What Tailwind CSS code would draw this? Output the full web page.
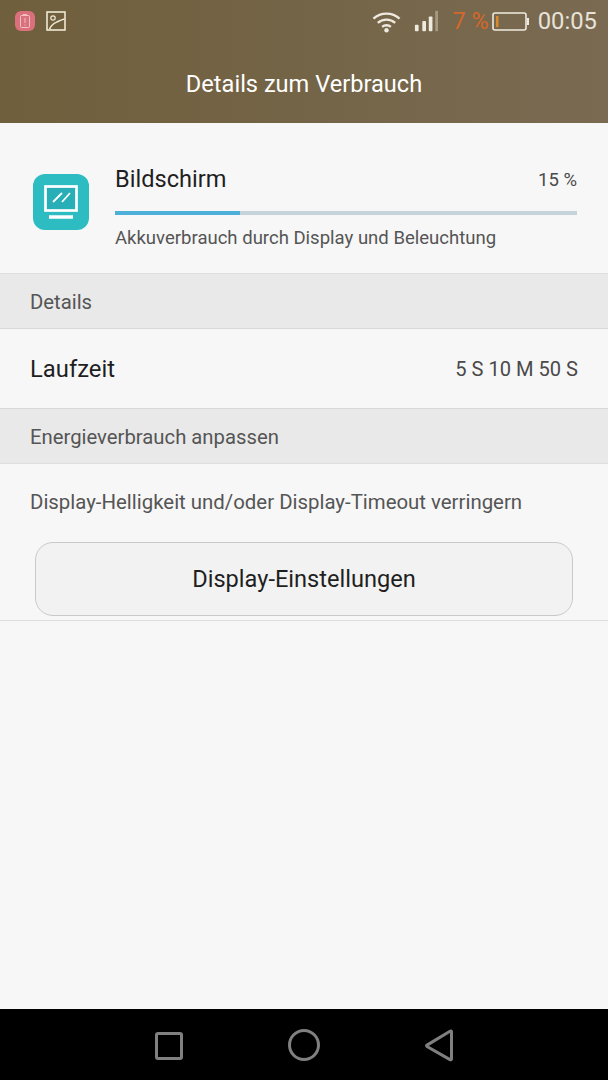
<!DOCTYPE html>
<html><head><meta charset="utf-8"><script src="https://cdn.jsdelivr.net/npm/@tailwindcss/browser@4"></script></head>
<body class="m-0">
<div class="w-[608px] h-[1080px] flex flex-col bg-[#f7f7f7] overflow-hidden font-['Roboto',sans-serif]">
  <header class="h-[123px] shrink-0 bg-gradient-to-r from-[#6f5f3c] to-[#7a6a52] flex flex-col">
    <div class="h-[42px] flex items-center justify-between pl-[15px] pr-[11px]">
      <div class="flex items-center gap-[11px]">
        <svg width="20" height="20" viewBox="0 0 20 20"><rect x="0" y="0" width="20" height="20" rx="6" fill="#d9707c"/><rect x="5.500" y="4.500" width="9" height="12" rx="1" fill="none" stroke="#f3c0c2" stroke-width="1"/><rect x="8" y="3" width="4" height="1.500" fill="#f3c0c2"/><path d="M10 7v5M10 13.500v1" stroke="#f3c0c2" stroke-width="1"/></svg>
        <svg width="20" height="20" viewBox="0 0 20 20" fill="none" stroke="#eee8d4" stroke-width="1.600"><rect x="1" y="1" width="18" height="18"/><circle cx="7" cy="7" r="2.200" stroke-width="1.200"/><path d="M3.500 18.500C5 13 9 12 12 10.500 14 9.500 16 8.500 18.500 8" /></svg>
      </div>
      <div class="flex items-center text-[24px] leading-none pt-[2px]">
        <svg width="29" height="22" viewBox="0 0 30 22" fill="none" stroke="#efeadf" stroke-width="2.400" class="mr-[13px]"><path d="M1.500 7.500C9 .5 21 .5 28.500 7.500"/><path d="M6 12c5-4.500 13-4.500 18 0"/><path d="M10.500 16c2.500-2.200 6.500-2.200 9 0"/><circle cx="15" cy="19.500" r="2.300" fill="#efeadf" stroke="none"/></svg>
        <svg width="24" height="23" viewBox="0 0 26 23" class="mr-[14px]"><rect x="1" y="15" width="4" height="7" rx="1" fill="#efeadf"/><rect x="9" y="11" width="4" height="11" rx="1" fill="#efeadf"/><rect x="16" y="6" width="4" height="16" rx="1" fill="#efeadf"/><rect x="23" y="0" width="3" height="22" fill="#a39a84"/></svg>
        <span class="text-[#d4682a] mr-[3px] text-[23.500px]">7 %</span>
        <svg width="38" height="20" viewBox="0 0 38 20" class="mr-[8px]" fill="none"><rect x="1" y="1" width="33" height="17" rx="2" stroke="#efeadf" stroke-width="1.600"/><rect x="35" y="6" width="2" height="7" fill="#efeadf"/><rect x="4" y="4" width="2.500" height="11" fill="#d98b2c"/></svg>
        <span class="text-[#e8e3d8] text-[23.800px]">00:05</span>
      </div>
    </div>
    <h1 class="text-center text-white text-[23.600px] leading-[27px] font-normal mt-[29px]">Details zum Verbrauch</h1>
  </header>
  <main class="flex-1 flex flex-col">
    <section class="h-[151px] shrink-0 flex items-start pl-[33px] pr-[31px] border-b border-[#dedede]">
      <div class="w-[56px] h-[56px] mt-[51px] rounded-[12px] bg-[#2cbcc2] flex items-center justify-center shrink-0">
        <svg width="36" height="36" viewBox="0 0 36 36" fill="none" stroke="#fff"><rect x="2.500" y="2.500" width="31" height="24" stroke-width="2.700" fill="#27aeb6"/><path d="M10 18l9-9M19 18l8-9" stroke-width="1.800"/><path d="M6 33h24" stroke-width="3.500"/></svg>
      </div>
      <div class="flex-1 ml-[26px]">
        <div class="flex justify-between items-center mt-[42px] h-[30px]">
          <span class="text-[23.600px] text-[#1f1f1f]">Bildschirm</span>
          <span class="text-[18.500px] text-[#4a4a4a] mt-[2px]">15 %</span>
        </div>
        <div class="h-[4px] mt-[16px] bg-[#c5d3da]"><div class="h-full w-[125px] bg-[#4cb0d8]"></div></div>
        <p class="text-[18.540px] leading-[24px] text-[#555] mt-[11px]">Akkuverbrauch durch Display und Beleuchtung</p>
      </div>
    </section>
    <div class="h-[54px] shrink-0 bg-[#e9e9e9] flex items-center px-[30px] pt-[2px] text-[20.300px] text-[#555]">Details</div>
    <div class="h-[81px] shrink-0 flex items-center justify-between pl-[30px] pr-[30px] pt-[2px] border-y border-[#d8d8d8]">
      <span class="text-[23.800px] text-[#1f1f1f]">Laufzeit</span>
      <span class="text-[20.100px] text-[#4a4a4a]">5 S 10 M 50 S</span>
    </div>
    <div class="h-[54px] shrink-0 bg-[#e9e9e9] flex items-center px-[30px] pt-[3px] text-[20.300px] text-[#555]">Energieverbrauch anpassen</div>
    <div class="h-[158px] shrink-0 border-y border-[#dedede] px-[30px]">
      <p class="text-[20.400px] leading-[26px] text-[#555] mt-[25px]">Display-Helligkeit und/oder Display-Timeout verringern</p>
      <button class="block w-[538px] h-[74px] ml-[5px] mt-[27px] rounded-[18px] border border-[#c9c9c9] bg-[#f2f2f2] text-[23.600px] text-[#1f1f1f] pt-[2px]">Display-Einstellungen</button>
    </div>
  </main>
  <nav class="h-[71px] shrink-0 bg-black flex items-center">
    <svg width="608" height="71" viewBox="0 0 608 71" fill="none" stroke="#808080" stroke-width="3"><rect x="156.500" y="24.500" width="25" height="25" rx="1.500"/><circle cx="304" cy="36" r="14.500"/><path d="M451.500 22.500v27.500c0 .8-.8 1-1.500.6L427 37.500c-.6-.4-.6-1 0-1.400l23-13.900c.7-.4 1.500-.2 1.500.3z"/></svg>
  </nav>
</div>
</body></html>
